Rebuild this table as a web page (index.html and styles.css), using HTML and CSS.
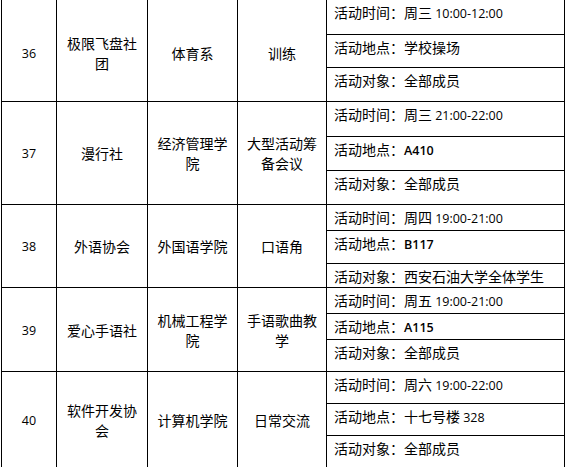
FILE: index.html
```html
<!DOCTYPE html>
<html lang="zh-CN">
<head>
<meta charset="utf-8">
<title>社团活动表</title>
<link rel="stylesheet" href="styles.css">
</head>
<body>
<table class="grid">
  <colgroup>
    <col class="col-no">
    <col class="col-name">
    <col class="col-dept">
    <col class="col-type">
    <col class="col-info">
  </colgroup>
  <tbody>
    <tr class="h35">
      <td class="main first" rowspan="3"><span class="en">36</span></td>
      <td class="main first" rowspan="3">极限飞盘社团</td>
      <td class="main first" rowspan="3">体育系</td>
      <td class="main first" rowspan="3">训练</td>
      <td class="info">活动时间：周三 <span class="en">10:00-12:00</span></td>
    </tr>
    <tr class="h33"><td class="info">活动地点：学校操场</td></tr>
    <tr class="h34"><td class="info">活动对象：全部成员</td></tr>

    <tr class="h35">
      <td class="main" rowspan="3"><span class="en">37</span></td>
      <td class="main" rowspan="3">漫行社</td>
      <td class="main" rowspan="3">经济管理学院</td>
      <td class="main" rowspan="3">大型活动筹备会议</td>
      <td class="info">活动时间：周三 <span class="en">21:00-22:00</span></td>
    </tr>
    <tr class="h34"><td class="info">活动地点：<span class="en b">A410</span></td></tr>
    <tr class="h34"><td class="info">活动对象：全部成员</td></tr>

    <tr class="h24">
      <td class="main" rowspan="3"><span class="en">38</span></td>
      <td class="main" rowspan="3">外语协会</td>
      <td class="main" rowspan="3">外国语学院</td>
      <td class="main" rowspan="3">口语角</td>
      <td class="info">活动时间：周四 <span class="en">19:00-21:00</span></td>
    </tr>
    <tr class="h33"><td class="info">活动地点：<span class="en b">B117</span></td></tr>
    <tr class="h24"><td class="info">活动对象：西安石油大学全体学生</td></tr>

    <tr class="h25">
      <td class="main" rowspan="3"><span class="en">39</span></td>
      <td class="main" rowspan="3">爱心手语社</td>
      <td class="main" rowspan="3">机械工程学院</td>
      <td class="main" rowspan="3">手语歌曲教学</td>
      <td class="info">活动时间：周五 <span class="en">19:00-21:00</span></td>
    </tr>
    <tr class="h26"><td class="info">活动地点：<span class="en b">A115</span></td></tr>
    <tr class="h32"><td class="info">活动对象：全部成员</td></tr>

    <tr class="h32">
      <td class="main" rowspan="3"><span class="en">40</span></td>
      <td class="main" rowspan="3">软件开发协会</td>
      <td class="main" rowspan="3">计算机学院</td>
      <td class="main" rowspan="3">日常交流</td>
      <td class="info">活动时间：周六 <span class="en">19:00-22:00</span></td>
    </tr>
    <tr class="h32"><td class="info">活动地点：十七号楼 <span class="en">328</span></td></tr>
    <tr class="h33"><td class="info">活动对象：全部成员</td></tr>
  </tbody>
</table>
</body>
</html>
```

FILE: styles.css
```css
html, body {
  margin: 0;
  padding: 0;
  background: #ffffff;
}

body {
  font-family: "Noto Sans CJK SC", "Noto Sans", sans-serif;
  color: #000000;
}

.grid {
  margin: -1px 0 0 1px;
  width: 564px;
  table-layout: fixed;
  border-collapse: separate;
  border-spacing: 0;
  border-top: 1px solid #000;
  border-left: 1px solid #000;
}

.col-no { width: 55px; }
.col-name { width: 91px; }
.col-dept { width: 90px; }
.col-type { width: 89px; }
.col-info { width: 238px; }

.grid td {
  border-right: 1px solid #000;
  border-bottom: 1px solid #000;
  font-size: 14px;
  padding: 0;
}

.main {
  text-align: center;
  vertical-align: middle;
  line-height: 20px;
  padding: 0 7px;
}

.grid td.main {
  padding: 0 7px;
}

.grid td.first {
  padding-top: 5px;
}

.grid td.info {
  vertical-align: top;
  line-height: 22px;
  padding: 1px 4px 0 7px;
  white-space: nowrap;
}

.en {
  font-family: "Open Sans", "Liberation Sans", sans-serif;
  font-size: 12.5px;
}

.en.b {
  font-weight: 600;
}

.h24 { height: 24px; }
.h25 { height: 25px; }
.h26 { height: 26px; }
.h32 { height: 32px; }
.h33 { height: 33px; }
.h34 { height: 34px; }
.h35 { height: 35px; }
```
